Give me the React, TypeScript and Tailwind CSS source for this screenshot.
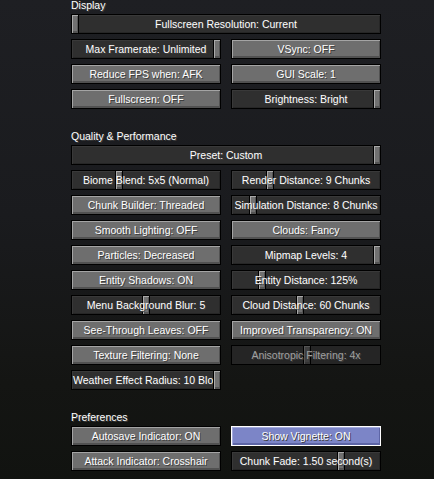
import React from "react";

type Item =
  | { kind: "button"; label: string; hover?: boolean }
  | { kind: "slider"; label: string; handle: number; disabled?: boolean; clip?: boolean };

interface Section {
  title: string;
  rows: { wide?: boolean; items: Item[] }[];
}

const sections: Section[] = [
  {
    title: "Display",
    rows: [
      { wide: true, items: [{ kind: "slider", label: "Fullscreen Resolution: Current", handle: 0 }] },
      {
        items: [
          { kind: "slider", label: "Max Framerate: Unlimited", handle: 142 },
          { kind: "button", label: "VSync: OFF" },
        ],
      },
      {
        items: [
          { kind: "button", label: "Reduce FPS when: AFK" },
          { kind: "button", label: "GUI Scale: 1" },
        ],
      },
      {
        items: [
          { kind: "button", label: "Fullscreen: OFF" },
          { kind: "slider", label: "Brightness: Bright", handle: 142 },
        ],
      },
    ],
  },
  {
    title: "Quality & Performance",
    rows: [
      { wide: true, items: [{ kind: "slider", label: "Preset: Custom", handle: 302 }] },
      {
        items: [
          { kind: "slider", label: "Biome Blend: 5x5 (Normal)", handle: 44 },
          { kind: "slider", label: "Render Distance: 9 Chunks", handle: 35 },
        ],
      },
      {
        items: [
          { kind: "button", label: "Chunk Builder: Threaded" },
          { kind: "slider", label: "Simulation Distance: 8 Chunks", handle: 18 },
        ],
      },
      {
        items: [
          { kind: "button", label: "Smooth Lighting: OFF" },
          { kind: "button", label: "Clouds: Fancy" },
        ],
      },
      {
        items: [
          { kind: "button", label: "Particles: Decreased" },
          { kind: "slider", label: "Mipmap Levels: 4", handle: 142 },
        ],
      },
      {
        items: [
          { kind: "button", label: "Entity Shadows: ON" },
          { kind: "slider", label: "Entity Distance: 125%", handle: 27 },
        ],
      },
      {
        items: [
          { kind: "slider", label: "Menu Background Blur: 5", handle: 71 },
          { kind: "slider", label: "Cloud Distance: 60 Chunks", handle: 65 },
        ],
      },
      {
        items: [
          { kind: "button", label: "See-Through Leaves: OFF" },
          { kind: "button", label: "Improved Transparency: ON" },
        ],
      },
      {
        items: [
          { kind: "button", label: "Texture Filtering: None" },
          { kind: "slider", label: "Anisotropic Filtering: 4x", handle: 72, disabled: true },
        ],
      },
      { items: [{ kind: "slider", label: "Weather Effect Radius: 10 Blocks", handle: 142, clip: true }] },
    ],
  },
  {
    title: "Preferences",
    rows: [
      {
        items: [
          { kind: "button", label: "Autosave Indicator: ON" },
          { kind: "button", label: "Show Vignette: ON", hover: true },
        ],
      },
      {
        items: [
          { kind: "button", label: "Attack Indicator: Crosshair" },
          { kind: "slider", label: "Chunk Fade: 1.50 second(s)", handle: 106 },
        ],
      },
    ],
  },
];

function Label({ text, dim, clip }: { text: string; dim?: boolean; clip?: boolean }) {
  return (
    <div
      className={`relative h-full flex items-center whitespace-nowrap overflow-hidden text-[10.5px] leading-[12px] [text-shadow:1px_1px_0_#3f3f3f] ${
        clip ? "justify-start pl-[1px] w-[141px]" : "justify-center w-full px-[2px]"
      } ${dim ? "text-[#a0a0a0]" : "text-white"}`}
    >
      {text}
    </div>
  );
}

function Control({ item, wide }: { item: Item; wide?: boolean }) {
  const width = wide ? "w-[310px]" : "w-[150px]";
  if (item.kind === "button") {
    const skin = item.hover
      ? "bg-[#7c85c7] border-white shadow-[inset_1px_1px_0_#a3aadd,inset_-1px_-2px_0_#5d65a6]"
      : "bg-[#6e6e6e] border-black shadow-[inset_1px_1px_0_#a4a4a4,inset_-1px_-2px_0_#515151]";
    return (
      <div className={`${width} h-[20px] border ${skin}`}>
        <Label text={item.label} />
      </div>
    );
  }
  return (
    <div
      className={`${width} relative h-[20px] border border-black ${
        item.disabled ? "bg-[#252525]" : "bg-[#2f2f2f] shadow-[inset_1px_1px_0_#393939,inset_-1px_-1px_0_#262626]"
      }`}
    >
      <div
        className={`absolute top-[-1px] w-[8px] h-[20px] border border-black ${
          item.disabled
            ? "bg-[#3e3e3e] shadow-[inset_1px_1px_0_#555555,inset_-1px_-2px_0_#333333]"
            : "bg-[#717171] shadow-[inset_1px_1px_0_#a9a9a9,inset_-1px_-2px_0_#545454]"
        }`}
        style={{ left: item.handle - 1 }}
      />
      <Label text={item.label} dim={item.disabled} clip={item.clip} />
    </div>
  );
}

export default function App() {
  return (
    <div className="w-[434px] h-[479px] overflow-hidden bg-[linear-gradient(180deg,#1e1f23_0%,#1a1b1e_45%,#141513_80%,#111310_100%)] font-['Liberation_Sans',Arial,sans-serif]">
      <div className="pl-[71px] flex flex-col gap-[22px]">
        {sections.map((section) => (
          <div key={section.title} className="flex flex-col">
            <div className="h-[14px] text-[10.5px] leading-[11px] text-white [text-shadow:1px_1px_0_#3f3f3f]">
              {section.title}
            </div>
            <div className="flex flex-col gap-[5px]">
              {section.rows.map((row, i) => (
                <div key={i} className="flex gap-[10px]">
                  {row.items.map((item) => (
                    <Control key={item.label} item={item} wide={row.wide} />
                  ))}
                </div>
              ))}
            </div>
          </div>
        ))}
      </div>
    </div>
  );
}
